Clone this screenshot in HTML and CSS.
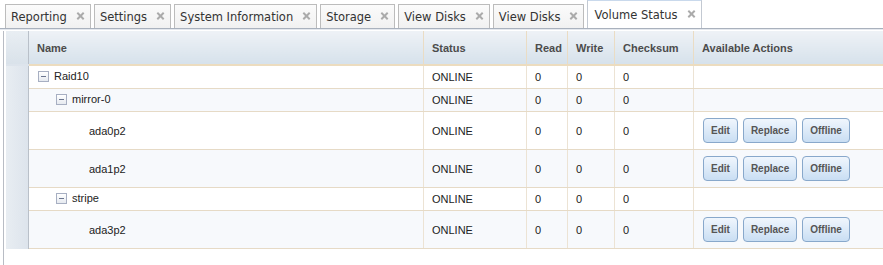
FILE: index.html
```html
<!DOCTYPE html>
<html lang="en">
<head>
  <meta charset="UTF-8">
  <title>Volume Status</title>
  <link rel="stylesheet" href="styles.css">
</head>
<body>
  <!-- Tab strip -->
  <div class="tabs">
    <div class="tab">Reporting<span class="close"></span></div>
    <div class="tab">Settings<span class="close"></span></div>
    <div class="tab">System Information<span class="close"></span></div>
    <div class="tab">Storage<span class="close"></span></div>
    <div class="tab">View Disks<span class="close"></span></div>
    <div class="tab">View Disks<span class="close"></span></div>
    <div class="tab active">Volume Status<span class="close"></span></div>
  </div>

  <!-- Volume tree grid -->
  <div class="panel">
    <table class="grid">
      <thead>
        <tr>
          <th class="gutter"></th>
          <th class="c-name">Name</th>
          <th class="c-status">Status</th>
          <th class="c-read">Read</th>
          <th class="c-write">Write</th>
          <th class="c-sum">Checksum</th>
          <th class="c-actions">Available Actions</th>
        </tr>
      </thead>
      <tbody>
        <tr class="node">
          <td class="gutter"></td>
          <td><span class="lvl1"><span class="toggle"></span>Raid10</span></td>
          <td>ONLINE</td><td>0</td><td>0</td><td>0</td><td></td>
        </tr>
        <tr class="node alt">
          <td class="gutter"></td>
          <td><span class="lvl2"><span class="toggle"></span>mirror-0</span></td>
          <td>ONLINE</td><td>0</td><td>0</td><td>0</td><td></td>
        </tr>
        <tr class="leaf">
          <td class="gutter"></td>
          <td><span class="lvl3">ada0p2</span></td>
          <td>ONLINE</td><td>0</td><td>0</td><td>0</td>
          <td><div class="actions"><button class="btn">Edit</button><button class="btn">Replace</button><button class="btn">Offline</button></div></td>
        </tr>
        <tr class="leaf alt">
          <td class="gutter"></td>
          <td><span class="lvl3">ada1p2</span></td>
          <td>ONLINE</td><td>0</td><td>0</td><td>0</td>
          <td><div class="actions"><button class="btn">Edit</button><button class="btn">Replace</button><button class="btn">Offline</button></div></td>
        </tr>
        <tr class="node">
          <td class="gutter"></td>
          <td><span class="lvl2"><span class="toggle"></span>stripe</span></td>
          <td>ONLINE</td><td>0</td><td>0</td><td>0</td><td></td>
        </tr>
        <tr class="leaf alt">
          <td class="gutter"></td>
          <td><span class="lvl3">ada3p2</span></td>
          <td>ONLINE</td><td>0</td><td>0</td><td>0</td>
          <td><div class="actions"><button class="btn">Edit</button><button class="btn">Replace</button><button class="btn">Offline</button></div></td>
        </tr>
      </tbody>
    </table>
  </div>
</body>
</html>
```

FILE: styles.css
```css
/* Page */
html, body {
  margin: 0;
  padding: 0;
  background: #ffffff;
  overflow: hidden;
  font-family: "Liberation Sans", Arial, sans-serif;
}

/* Tabs */
.tabs {
  display: flex;
  align-items: flex-end;
  gap: 3px;
  height: 28px;
  padding-left: 5px;
  border-bottom: 1px solid #a9b1bd;
  box-shadow: 0 1px 0 #e4e8ee;
}
.tab {
  display: flex;
  align-items: center;
  height: 23px;
  padding: 0 6px 0 5px;
  border: 1px solid #bcbcbc;
  border-bottom: none;
  background: linear-gradient(#fbfbfb, #f1f1f1);
  font-family: "DejaVu Sans", Verdana, sans-serif;
  font-size: 11.5px;
  color: #333;
}
.tab.active {
  height: 27px;
  background: #ffffff;
  border-color: #c3c9d2;
  border-top: 2px solid #c9d9ec;
  padding-left: 6px;
}
.close {
  width: 7px;
  height: 7px;
  margin-left: 10px;
  position: relative;
}
.close::before, .close::after {
  content: "";
  position: absolute;
  left: -1px;
  top: 2px;
  width: 9px;
  height: 2px;
  background: #ababab;
  transform: rotate(45deg);
}
.close::after {
  transform: rotate(-45deg);
}

/* Grid panel */
.panel {
  margin-left: 3px;
  margin-top: 2px;
  padding-left: 2px;
  border-left: 1px solid #b8bcc4;
  height: 236px;
}
.grid {
  border-collapse: collapse;
  width: 900px;
  table-layout: fixed;
  font-size: 11px;
  color: #222;
}
.grid th {
  height: 33px;
  padding: 0 0 0 8px;
  text-align: left;
  font-weight: bold;
  color: #4c4c4c;
  background: linear-gradient(#eef2f6, #d6e1eb);
  border-left: 1px solid #eadcc4;
  border-bottom: 2px solid #ecdcbf;
}
.grid td {
  padding: 0 0 0 8px;
  border-left: 1px solid #ece3d4;
  border-bottom: 1px solid #e6dac6;
  white-space: nowrap;
}
.grid .gutter {
  width: 22px;
  padding: 0;
  border-left: none;
  border-right: 1px solid #b9c0c9;
  border-bottom: none;
  background: linear-gradient(90deg, #e8edf2, #dde4ec);
}
.grid th.gutter {
  background: linear-gradient(#e9eef3, #d9e2ea);
  border-bottom: 2px solid #dde4ec;
}
.c-name { width: 386px; }
.c-status { width: 94px; }
.c-read { width: 32px; }
.c-write { width: 38px; }
.c-sum { width: 70px; }

.node td { height: 22px; }
.leaf td { height: 37px; }
.alt td { background: #f7f9fc; }
.grid td.gutter { background: linear-gradient(90deg, #e8edf2, #dde4ec); }

/* Tree */
.lvl1, .lvl2, .lvl3 {
  display: inline-flex;
  align-items: center;
}
.lvl1 { margin-left: 1px; }
.lvl2 { margin-left: 19px; }
.lvl3 { margin-left: 52px; }
.toggle {
  width: 9px;
  height: 9px;
  margin-right: 5px;
  border: 1px solid #a7afc2;
  background: linear-gradient(#ffffff, #e6eaf0);
  position: relative;
}
.toggle::after {
  content: "";
  position: absolute;
  left: 2px;
  top: 4px;
  width: 5px;
  height: 1px;
  background: #6c7690;
}

/* Action buttons */
.actions {
  display: flex;
  gap: 5px;
  padding-left: 1px;
}
.btn {
  height: 25px;
  padding: 0 7px;
  border: 1px solid #88a8cb;
  border-radius: 4px;
  background: linear-gradient(#f0f6fd, #c9def3);
  font-family: "Liberation Sans", Arial, sans-serif;
  font-size: 10px;
  font-weight: bold;
  color: #555;
}
```
